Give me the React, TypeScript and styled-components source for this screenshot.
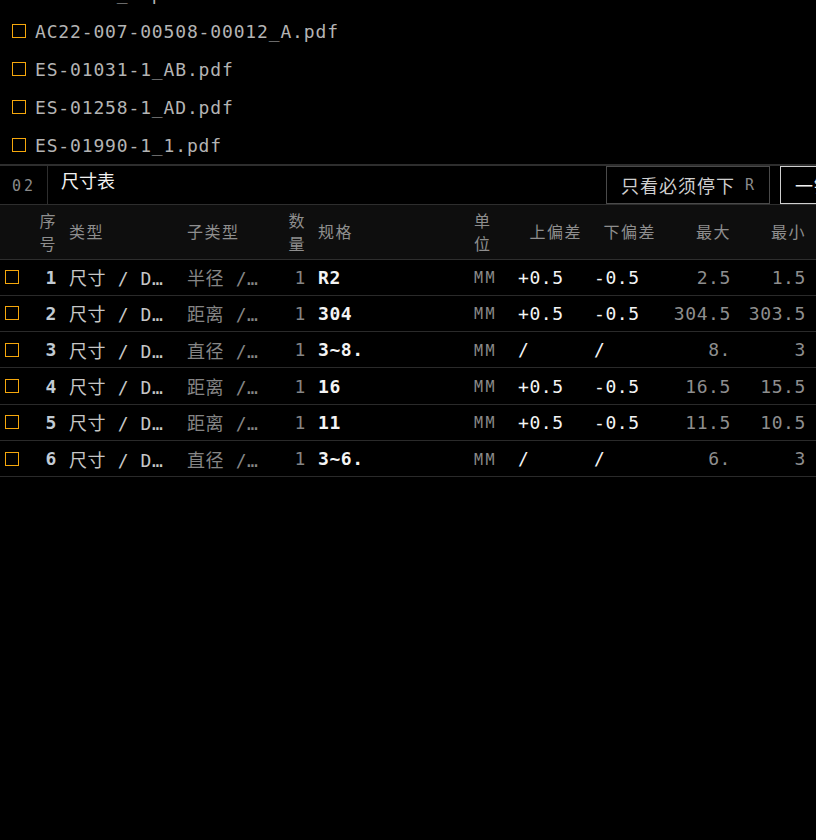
import { useLayoutEffect, useRef } from 'react';
import styled, { createGlobalStyle } from 'styled-components';

const GlobalStyle = createGlobalStyle`
  html, body {
    margin: 0;
    padding: 0;
    background: #000;
    overflow: hidden;
  }
  body {
    font-family: "DejaVu Sans Mono", "Noto Sans CJK SC", monospace;
    color: #c8c8c8;
  }
`;

const Page = styled.div`
  width: 816px;
  height: 840px;
  background: #000;
  display: flex;
  flex-direction: column;
  overflow: hidden;
`;

const FileList = styled.div`
  height: 164px;
  overflow: hidden;
  border-bottom: 2px solid #2e2e2e;
  flex-shrink: 0;
`;

const FileRow = styled.div`
  height: 38px;
  display: flex;
  align-items: center;
  gap: 9px;
  padding-left: 12px;
  font-size: 18px;
  letter-spacing: 0.85px;
  color: #b4b4b4;
  white-space: nowrap;
`;

const Check = styled.span`
  width: 14px;
  height: 14px;
  box-sizing: border-box;
  border: 1px solid #f5a70c;
  flex-shrink: 0;
  display: inline-block;
`;

const TitleBar = styled.div`
  height: 38px;
  display: flex;
  align-items: stretch;
  border-bottom: 1px solid #2e2e2e;
  flex-shrink: 0;
  white-space: nowrap;
`;

const Index = styled.div`
  width: 48px;
  flex-shrink: 0;
  box-sizing: border-box;
  border-right: 1px solid #2e2e2e;
  padding: 2px 0 0 12px;
  display: flex;
  align-items: center;
  font-size: 15px;
  letter-spacing: 3px;
  color: #8a8a8a;
`;

const Title = styled.div`
  width: 558px;
  flex-shrink: 0;
  box-sizing: border-box;
  padding: 1px 0 0 13px;
  font-family: "Noto Sans CJK SC", sans-serif;
  font-size: 18px;
  color: #f2f2f2;
`;

const ToolButton = styled.button<{ $strong?: boolean }>`
  margin: 0 10px 0 0;
  background: #000;
  border: 1px solid ${p => (p.$strong ? '#cfcfcf' : '#4a4a4a')};
  color: ${p => (p.$strong ? '#f2f2f2' : '#cfcfcf')};
  font-family: "Noto Sans CJK SC", sans-serif;
  font-size: 18px;
  letter-spacing: 1px;
  padding: 0 14px 0 14px;
  display: flex;
  align-items: center;
  gap: 10px;
  flex-shrink: 0;
`;

const Key = styled.span`
  font-family: "DejaVu Sans Mono", monospace;
  font-size: 15px;
  color: #8a8a8a;
`;

const Table = styled.table`
  width: 100%;
  table-layout: fixed;
  border-collapse: collapse;
`;

const Th = styled.th<{ $align?: 'left' | 'right'; $pr?: number }>`
  height: 54px;
  box-sizing: border-box;
  padding: 0 ${p => p.$pr ?? 6}px 0 6px;
  background: #0e0e0e;
  border-bottom: 1px solid #2e2e2e;
  font-family: "Noto Sans CJK SC", sans-serif;
  font-size: 16px;
  font-weight: 400;
  letter-spacing: 1.5px;
  line-height: 23px;
  color: #8e8e8e;
  text-align: ${p => p.$align ?? 'left'};
  vertical-align: middle;
`;

const Tr = styled.tr`
  height: 36.3px;
  border-bottom: 1px solid #2a2a2a;
`;

type Tone = 'seq' | 'type' | 'dim' | 'spec' | 'unit' | 'tol' | 'limit';

const toneColor: Record<Tone, string> = {
  seq: '#c2cbd4',
  type: '#c6c6c6',
  dim: '#858585',
  spec: '#f4f4f4',
  unit: '#8a8a8a',
  tol: '#f4f4f4',
  limit: '#8e8e8e',
};

const Td = styled.td<{ $tone?: Tone; $align?: 'left' | 'right'; $pr?: number }>`
  padding: ${p => (p.$tone === 'unit' ? '2px' : '0')} ${p => p.$pr ?? 6}px 0 6px;
  font-size: ${p => (p.$tone === 'unit' ? '15px' : '18px')};
  letter-spacing: ${p => (p.$tone === 'unit' ? '2.5px' : '0.6px')};
  font-weight: ${p => (p.$tone === 'seq' || p.$tone === 'spec' ? 700 : 400)};
  color: ${p => toneColor[p.$tone ?? 'type']};
  text-align: ${p => p.$align ?? 'left'};
  white-space: nowrap;
  overflow: hidden;
  text-overflow: ellipsis;
`;

const CheckCell = styled.td`
  padding: 0 0 0 5px;
  vertical-align: middle;
  line-height: 0;
`;

const files = [
  'ES-0098_A.pdf',
  'AC22-007-00508-00012_A.pdf',
  'ES-01031-1_AB.pdf',
  'ES-01258-1_AD.pdf',
  'ES-01990-1_1.pdf',
];

interface Dim {
  seq: number;
  sub: string;
  spec: string;
  upper: string;
  lower: string;
  max: string;
  min: string;
}

const dims: Dim[] = [
  { seq: 1, sub: '半径 / Radius', spec: 'R2', upper: '+0.5', lower: '-0.5', max: '2.5', min: '1.5' },
  { seq: 2, sub: '距离 / Distance', spec: '304', upper: '+0.5', lower: '-0.5', max: '304.5', min: '303.5' },
  { seq: 3, sub: '直径 / Diameter', spec: '3~8.', upper: '/', lower: '/', max: '8.', min: '3' },
  { seq: 4, sub: '距离 / Distance', spec: '16', upper: '+0.5', lower: '-0.5', max: '16.5', min: '15.5' },
  { seq: 5, sub: '距离 / Distance', spec: '11', upper: '+0.5', lower: '-0.5', max: '11.5', min: '10.5' },
  { seq: 6, sub: '直径 / Diameter', spec: '3~6.', upper: '/', lower: '/', max: '6.', min: '3' },
];

export default function App() {
  const listRef = useRef<HTMLDivElement>(null);

  // the file list is scrolled part way down, as in the capture
  useLayoutEffect(() => {
    if (listRef.current) listRef.current.scrollTop = 26;
  }, []);

  return (
    <Page>
      <GlobalStyle />
      <FileList ref={listRef}>
        {files.map(f => (
          <FileRow key={f}>
            <Check />
            {f}
          </FileRow>
        ))}
        <FileRow />
      </FileList>

      <TitleBar>
        <Index>02</Index>
        <Title>尺寸表</Title>
        <ToolButton>
          只看必须停下 <Key>R</Key>
        </ToolButton>
        <ToolButton $strong>一键全选</ToolButton>
      </TitleBar>

      <Table>
        <colgroup>
          <col style={{ width: 30 }} />
          <col style={{ width: 33 }} />
          <col style={{ width: 118 }} />
          <col style={{ width: 89 }} />
          <col style={{ width: 42 }} />
          <col style={{ width: 156 }} />
          <col style={{ width: 44 }} />
          <col style={{ width: 76 }} />
          <col style={{ width: 74 }} />
          <col style={{ width: 75 }} />
          <col />
        </colgroup>
        <thead>
          <tr>
            <Th />
            <Th $align="right">序号</Th>
            <Th>类型</Th>
            <Th>子类型</Th>
            <Th $align="right">数量</Th>
            <Th>规格</Th>
            <Th>单位</Th>
            <Th $align="right">上偏差</Th>
            <Th $align="right">下偏差</Th>
            <Th $align="right">最大</Th>
            <Th $align="right" $pr={10}>最小</Th>
          </tr>
        </thead>
        <tbody>
          {dims.map(d => (
            <Tr key={d.seq}>
              <CheckCell>
                <Check />
              </CheckCell>
              <Td $tone="seq" $align="right">{d.seq}</Td>
              <Td $tone="type" $pr={12}>尺寸 / Dimension</Td>
              <Td $tone="dim">{d.sub}</Td>
              <Td $tone="dim" $align="right">1</Td>
              <Td $tone="spec">{d.spec}</Td>
              <Td $tone="unit">MM</Td>
              <Td $tone="tol">{d.upper}</Td>
              <Td $tone="tol">{d.lower}</Td>
              <Td $tone="limit" $align="right">{d.max}</Td>
              <Td $tone="limit" $align="right" $pr={10}>{d.min}</Td>
            </Tr>
          ))}
        </tbody>
      </Table>
    </Page>
  );
}
